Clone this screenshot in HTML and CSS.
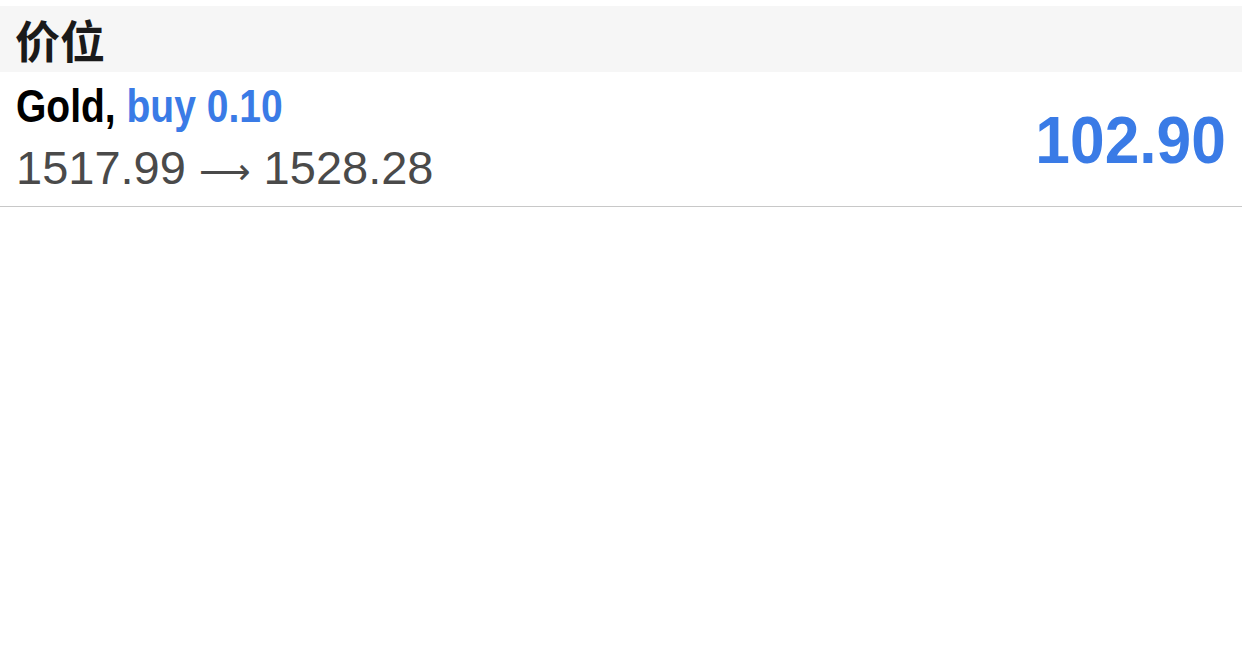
FILE: index.html
```html
<!DOCTYPE html>
<html lang="zh">
<head>
    <meta charset="UTF-8">
    <meta name="viewport" content="width=device-width, initial-scale=1.0">
    <title>价位</title>
    <link rel="stylesheet" href="styles.css">
</head>
<body>
    <div class="list">
        <div class="section-header">价位</div>
        <div class="trade-row">
            <div class="trade-info">
                <div class="trade-title">Gold, <span class="trade-type">buy 0.10</span></div>
                <div class="trade-prices">1517.99 <span class="arrow">⟶</span> 1528.28</div>
            </div>
            <div class="trade-profit">102.90</div>
        </div>
    </div>
</body>
</html>
```

FILE: styles.css
```css
body {
    margin: 0;
    padding: 0;
    background-color: #ffffff;
    font-family: "Liberation Sans", Arial, "Noto Sans CJK SC", sans-serif;
}
.list {
    padding-top: 6px;
}
.section-header {
    height: 66px;
    box-sizing: border-box;
    padding-left: 15px;
    display: flex;
    align-items: center;
    background-color: #f6f6f6; /* gris claro */
    font-family: "Noto Sans CJK SC", sans-serif;
    font-size: 45px;
    font-weight: bold;
    color: #1a1a1a;
}
.trade-row {
    height: 135px;
    box-sizing: border-box;
    display: flex;
    justify-content: space-between;
    align-items: center;
    padding: 0 16px;
    border-bottom: 1px solid #c8c8c8;
}
.trade-info {
    display: flex;
    flex-direction: column;
    align-items: flex-start;
}
.trade-title {
    font-weight: bold;
    font-size: 47px;
    line-height: 62px;
    color: #000000;
    white-space: nowrap;
    transform: scaleX(0.83); /* condensada */
    transform-origin: left center;
}
.trade-type {
    color: #3a7be6; /* azul */
}
.trade-prices {
    font-size: 47px;
    line-height: 62px;
    color: #4a4a4a;
    white-space: nowrap;
}
.arrow {
    font-family: "DejaVu Sans", sans-serif;
    font-size: 36px;
}
.trade-profit {
    font-weight: bold;
    font-size: 67px;
    color: #3a7be6;
    transform: scaleX(0.93);
    transform-origin: right center;
}
```
